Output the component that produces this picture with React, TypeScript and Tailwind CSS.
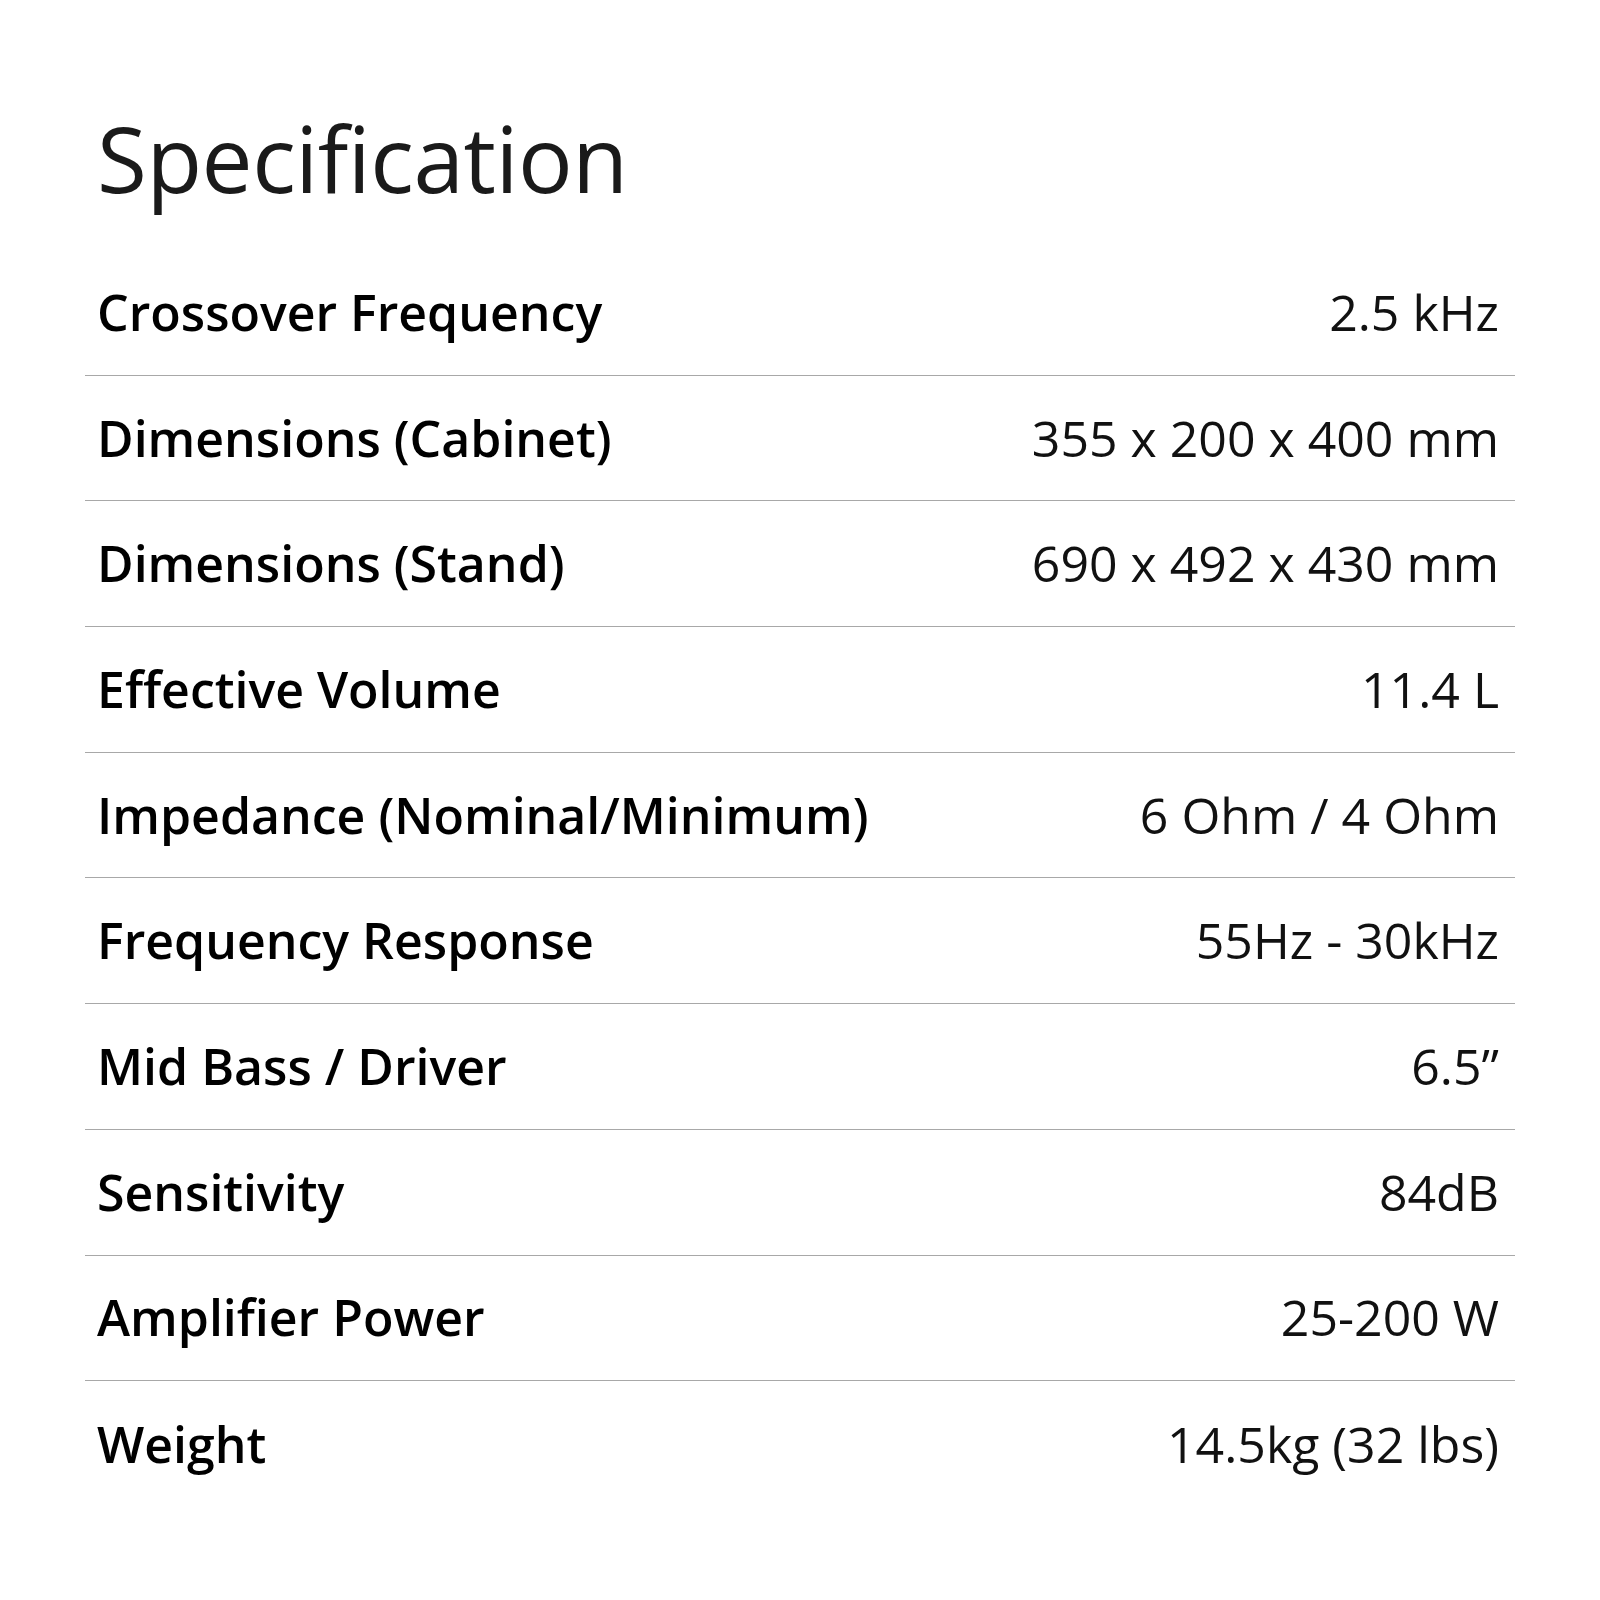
const specs: [string, string][] = [
  ["Crossover Frequency", "2.5 kHz"],
  ["Dimensions (Cabinet)", "355 x 200 x 400 mm"],
  ["Dimensions (Stand)", "690 x 492 x 430 mm"],
  ["Effective Volume", "11.4 L"],
  ["Impedance (Nominal/Minimum)", "6 Ohm / 4 Ohm"],
  ["Frequency Response", "55Hz - 30kHz"],
  ["Mid Bass / Driver", "6.5\u201D"],
  ["Sensitivity", "84dB"],
  ["Amplifier Power", "25-200 W"],
  ["Weight", "14.5kg (32 lbs)"],
]

export default function App() {
  return (
    <div className="w-[1600px] h-[1600px] bg-white font-['Open_Sans',sans-serif] text-black">
      <div className="pl-[85px] w-[1515px] pt-[96px]">
        <h1 className="pl-[12px] text-[91px] leading-[124px] font-normal text-[#1a1a1a] tracking-[-0.5px]">
          Specification
        </h1>
        <div className="mt-[30px]">
          {specs.map(([label, value], i) => (
            <div
              key={label}
              className={
                "flex items-center justify-between h-[125.7px] pl-[12px] pr-[16px] " +
                (i < specs.length - 1 ? "border-b-[1.5px] border-[#a8a8a8]" : "")
              }
            >
              <span className="text-[50px] font-semibold">{label}</span>
              <span className="text-[50px] font-normal text-[#111]">{value}</span>
            </div>
          ))}
        </div>
      </div>
    </div>
  )
}
